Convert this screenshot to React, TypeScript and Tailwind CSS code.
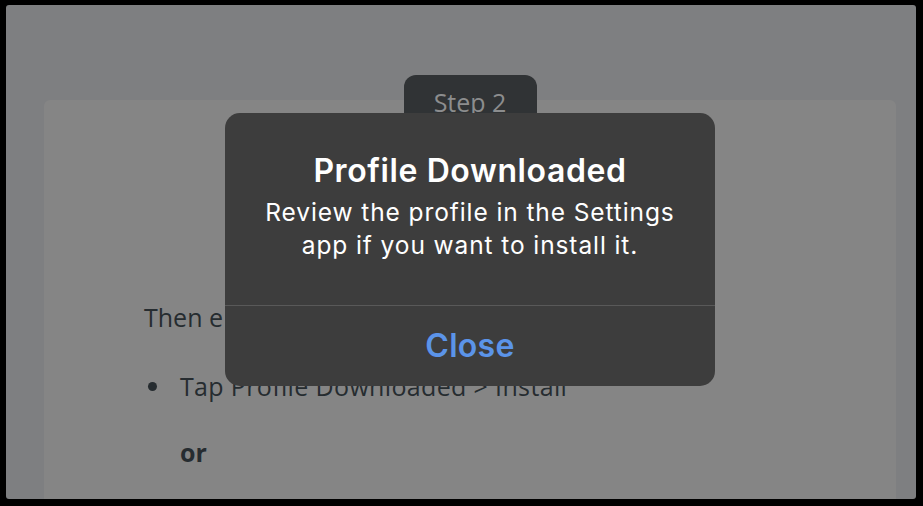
import React from 'react';

export default function App() {
  return (
    <div className="w-[923px] h-[506px] bg-black pt-[5px] pl-[6px] pr-[7px] pb-[7px] overflow-hidden">
      {/* ── Dimmed page ───────────────────────────────────────────── */}
      <div className="relative w-full h-full bg-[#7e7f81] rounded-[3px] overflow-hidden pt-[70px] pl-[38px] pr-[20px]">
        <div className="flex justify-center">
          <div className="w-[133px] h-[40px] bg-[#303335] rounded-t-[12px] flex justify-center pt-[10px] text-[#8c8d8e] text-[25px] leading-[34px] font-['Open_Sans',sans-serif]">
            Step 2
          </div>
        </div>
        <div className="-mt-[15px] h-[420px] bg-[#858585] rounded-[6px] pl-[100px] pt-[200px] text-[#262c30] font-['Open_Sans',sans-serif] text-[25px]">
          <p className="leading-[34px]">Then e</p>
          <ul className="mt-[35px]">
            <li className="flex items-center gap-[23px] ml-[4px] leading-[34px] tracking-[0.35px]">
              <span className="w-[9px] h-[9px] rounded-full bg-[#262c30]" />
              Tap Profile Downloaded &gt; Install
            </li>
          </ul>
          <p className="mt-[32px] ml-[36px] font-bold leading-[34px]">or</p>
        </div>

        {/* ── Alert ─────────────────────────────────────────────── */}
        <div className="absolute left-[219px] top-[108px] w-[490px] h-[273px] bg-[#3d3d3d] rounded-[15px] flex flex-col font-['Inter',sans-serif] text-white">
          <div className="flex-1 flex flex-col items-center pt-[39px]">
            <h2 className="text-[32px] font-semibold leading-[38px] tracking-[0.6px]">Profile Downloaded</h2>
            <p className="mt-[6px] text-center text-[24.5px] leading-[33px] tracking-[0.9px]">
              Review the profile in the Settings<br />app if you want to install it.
            </p>
          </div>
          <div className="h-px bg-[#595959]" />
          <div className="h-[80px] flex items-center justify-center text-[#5b94e9] text-[32px] font-semibold tracking-[0.3px]">
            Close
          </div>
        </div>
      </div>
    </div>
  );
}
